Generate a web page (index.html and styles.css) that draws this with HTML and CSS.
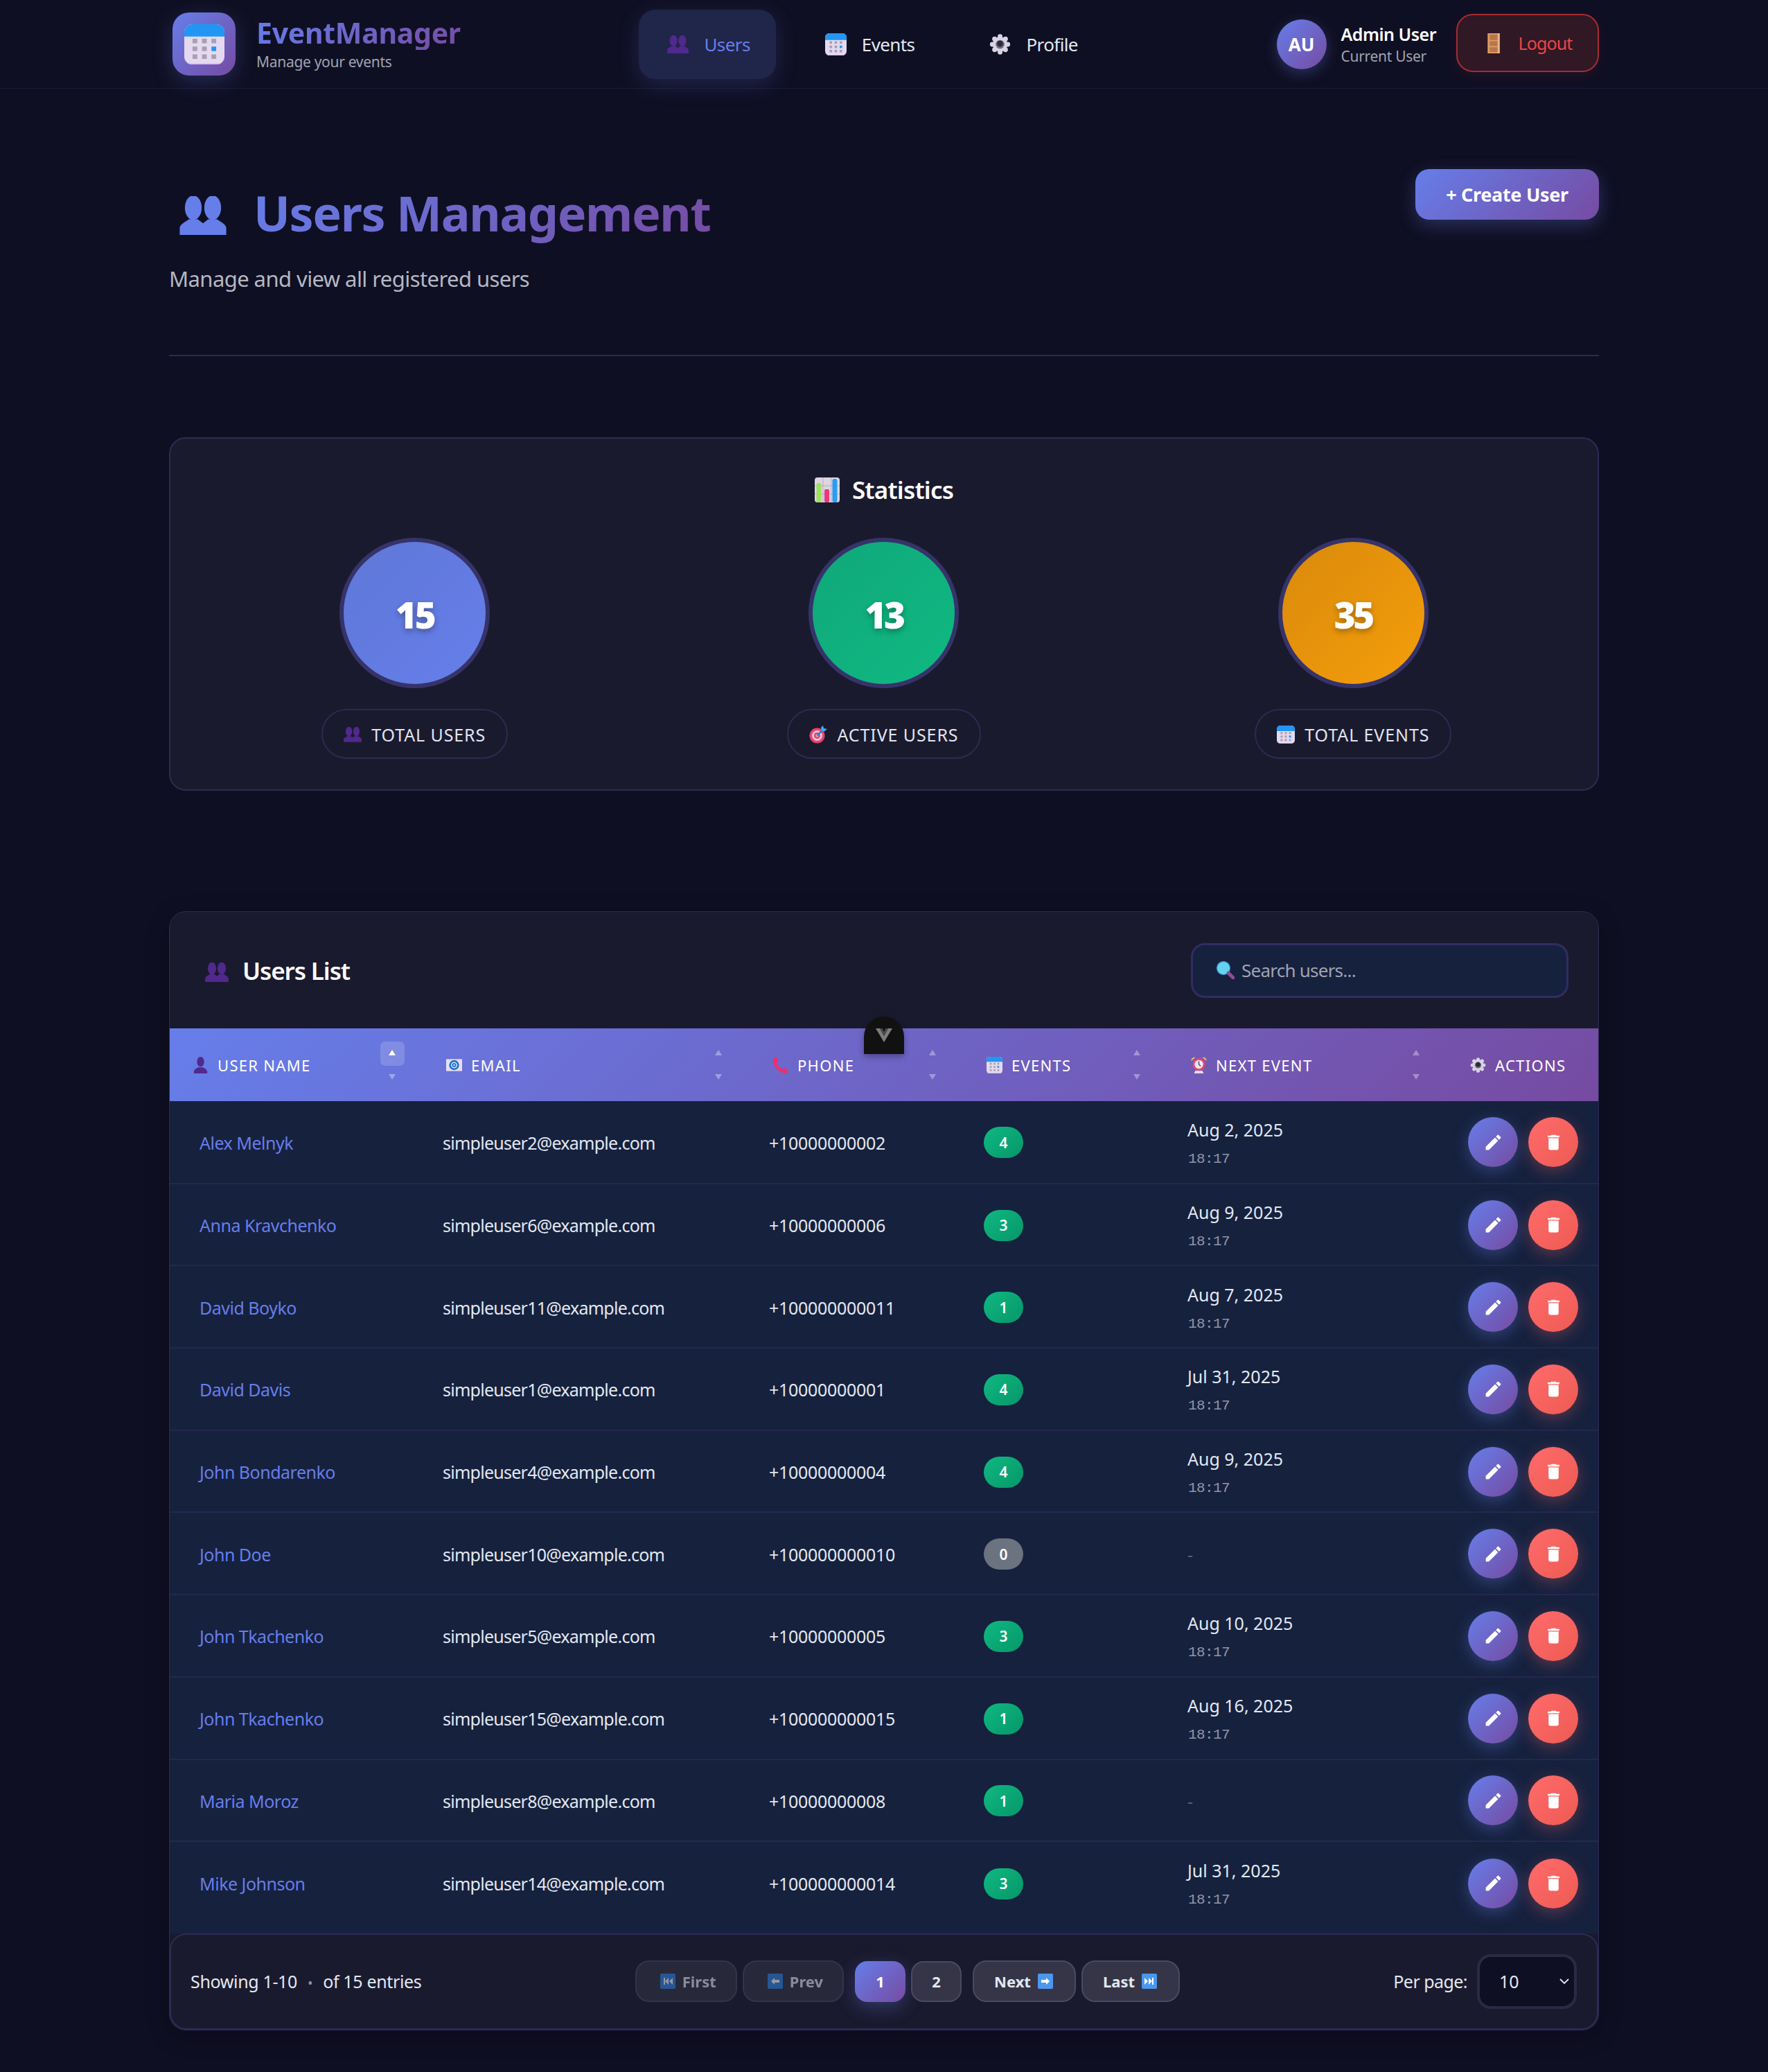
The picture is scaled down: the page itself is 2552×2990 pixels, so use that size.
FILE: index.html
```html
<!DOCTYPE html>
<html lang="en">
<head>
<meta charset="utf-8">
<title>EventManager - Users</title>
<link rel="stylesheet" href="styles.css">
</head>
<body>
<svg class="sprite" aria-hidden="true">
  <symbol id="i-users" viewBox="0 0 36 30">
    <ellipse cx="10.500" cy="9" rx="6.500" ry="9.500" fill="currentColor"/>
    <ellipse cx="25.500" cy="9" rx="6.500" ry="9.500" fill="currentColor"/>
    <path d="M0 30v-5c0-3 3-4 7-7h7l4 3 4-3h7c4 3 7 4 7 7v5z" fill="currentColor"/>
  </symbol>
  <symbol id="i-user" viewBox="0 0 24 30">
    <ellipse cx="12" cy="9" rx="6.500" ry="9" fill="currentColor"/>
    <path d="M0 30v-3c0-4 4-6 8-8h8c4 2 8 4 8 8v3z" fill="currentColor"/>
  </symbol>
  <symbol id="i-cal" viewBox="0 0 34 36" preserveAspectRatio="none">
    <rect x="0" y="0" width="34" height="36" rx="7" fill="#e4d9ef"/>
    <path d="M0 11V7a7 7 0 0 1 7-7h20a7 7 0 0 1 7 7v4z" fill="#2196f3"/>
    <path d="M0 31a7 5 0 0 0 7 5h20a7 5 0 0 0 7-5v1a5 4 0 0 1-5 3H5a5 4 0 0 1-5-3z" fill="#d8b4f0"/>
    <g fill="#a79fb2">
      <rect x="7" y="13" width="4" height="4"/><rect x="15" y="13" width="4" height="4"/><rect x="23" y="13" width="4" height="4"/>
      <rect x="7" y="20" width="4" height="4"/><rect x="15" y="20" width="4" height="4"/>
      <rect x="7" y="27" width="4" height="4"/><rect x="15" y="27" width="4" height="4"/><rect x="23" y="27" width="4" height="4"/>
    </g>
    <rect x="23" y="20" width="4" height="4" fill="#2196f3"/>
  </symbol>
  <symbol id="i-gear" viewBox="0 0 32 32">
    <g fill="#d9d3e3">
      <circle cx="16" cy="4.500" r="3.600"/><circle cx="16" cy="27.500" r="3.600"/><circle cx="4.500" cy="16" r="3.600"/><circle cx="27.500" cy="16" r="3.600"/>
      <circle cx="7.900" cy="7.900" r="3.600"/><circle cx="24.100" cy="7.900" r="3.600"/><circle cx="7.900" cy="24.100" r="3.600"/><circle cx="24.100" cy="24.100" r="3.600"/>
      <circle cx="16" cy="16" r="11"/>
    </g>
    <circle cx="16" cy="16" r="6.500" fill="#6f6a7c"/>
    <circle cx="16" cy="15" r="4.500" fill="#2c2a3e"/>
  </symbol>
  <symbol id="i-door" viewBox="0 0 18 30">
    <rect width="18" height="30" fill="#dd9a63"/>
    <path d="M3 2h12v8H3zM3 12h12v7H3zM3 21h12v7H3z" fill="#b8764a"/>
    <rect x="15" y="0" width="3" height="30" fill="#e9b488"/>
  </symbol>
  <symbol id="i-chart" viewBox="0 0 36 36">
    <rect width="36" height="36" rx="4" fill="#dcd6e3"/>
    <path d="M0 12h36M0 24h36M12 0v36M24 0v36" stroke="#aaa4b3" stroke-width=".8"/>
    <rect x="2.500" y="8" width="7" height="28" rx="2.500" fill="#9ee05a"/>
    <rect x="14" y="17" width="7" height="19" rx="2" fill="#ea3a7e"/>
    <rect x="25.500" y="2" width="7" height="34" rx="2.500" fill="#2b9cf0"/>
  </symbol>
  <symbol id="i-target" viewBox="0 0 26 26">
    <circle cx="11.500" cy="14.500" r="11" fill="#e8436f"/>
    <circle cx="11.500" cy="14.500" r="7.500" fill="#efc3d8"/>
    <circle cx="11.500" cy="14.500" r="4.500" fill="#e8436f"/>
    <circle cx="11.500" cy="14.500" r="2" fill="#c8c4ce"/>
    <path d="M11.500 14.500 21 5" stroke="#1f7fd6" stroke-width="2.400"/>
    <path d="M17 3 20 0l1 4 5 1-4 3.500-4-.5z" fill="#46a9f5"/>
  </symbol>
  <symbol id="i-mail" viewBox="0 0 24 18">
    <rect width="24" height="18" fill="#e8def2"/>
    <circle cx="12" cy="9" r="7.500" fill="#1e73cf"/>
    <circle cx="12" cy="9" r="4" fill="none" stroke="#cfe4fa" stroke-width="1.600"/>
    <circle cx="12" cy="9" r="1.300" fill="#cfe4fa"/>
  </symbol>
  <symbol id="i-phone" viewBox="0 0 24 26">
    <path d="M4 2C1 8 6 20 20 24" fill="none" stroke="#e8326f" stroke-width="5"/>
    <path d="M2 1l5 0 2 6-4 2zM14 20l4-3 6 5-3 4z" fill="#e8326f"/>
  </symbol>
  <symbol id="i-alarm" viewBox="0 0 22 24">
    <path d="M0 6a4.500 4.500 0 0 1 6-5zM22 6a4.500 4.500 0 0 0-6-5z" fill="#f2c13d"/>
    <circle cx="11" cy="11" r="9" fill="#e8436f"/>
    <circle cx="11" cy="11" r="6.200" fill="#f0e8f3"/>
    <path d="M11 6.500V11l2.500 2.500" stroke="#4b4660" stroke-width="1.500" fill="none"/>
    <path d="M4 24l2-4h10l2 4z" fill="#e4d9ef"/>
  </symbol>
  <symbol id="i-search" viewBox="0 0 26 26">
    <circle cx="10" cy="10" r="9.500" fill="#62d4ee"/>
    <circle cx="10" cy="10" r="9.500" fill="none" stroke="#3b8fc9" stroke-width="1.200"/>
    <path d="M17 17l7 7" stroke="#8e4d93" stroke-width="5" stroke-linecap="round"/>
  </symbol>
  <symbol id="i-first" viewBox="0 0 22 22">
    <rect width="22" height="22" rx="2" fill="#2f89ea"/>
    <path d="M5 6h2v10H5zM12 6v10L7 11zM18 6v10l-5-5z" fill="#fff"/>
  </symbol>
  <symbol id="i-prev" viewBox="0 0 22 22">
    <rect width="22" height="22" rx="2" fill="#2f89ea"/>
    <path d="M5 11l5-5v3h7v4h-7v3z" fill="#fff"/>
  </symbol>
  <symbol id="i-next" viewBox="0 0 22 22">
    <rect width="22" height="22" rx="2" fill="#4a97f0"/>
    <path d="M17 11l-5-5v3H5v4h7v3z" fill="#fff"/>
  </symbol>
  <symbol id="i-last" viewBox="0 0 22 22">
    <rect width="22" height="22" rx="2" fill="#4a97f0"/>
    <path d="M17 6h-2v10h2zM10 6v10l5-5zM4 6v10l5-5z" fill="#fff"/>
  </symbol>
  <symbol id="i-edit" viewBox="0 0 24 24">
    <path d="M3 17.250V21h3.750L17.810 9.940l-3.750-3.750L3 17.250zM20.710 7.040a1 1 0 0 0 0-1.410l-2.340-2.340a1 1 0 0 0-1.410 0l-1.830 1.830 3.750 3.750 1.830-1.830z" fill="#fff"/>
  </symbol>
  <symbol id="i-trash" viewBox="0 0 24 24">
    <path d="M6 19c0 1.100.9 2 2 2h8c1.100 0 2-.9 2-2V7H6v12zM19 4h-3.500l-1-1h-5l-1 1H5v2h14V4z" fill="#fff"/>
  </symbol>
</svg>

<header class="topbar">
  <div class="topbar-inner">
    <a class="brand">
      <span class="brand-logo"><svg class="logo-cal"><use href="#i-cal"/></svg></span>
      <span class="brand-text">
        <span class="brand-name">EventManager</span>
        <span class="brand-sub">Manage your events</span>
      </span>
    </a>
    <nav class="nav">
      <a class="nav-item active"><svg class="ic-nav ic-purple"><use href="#i-users"/></svg>Users</a>
      <a class="nav-item"><svg class="ic-nav"><use href="#i-cal"/></svg>Events</a>
      <a class="nav-item"><svg class="ic-nav"><use href="#i-gear"/></svg>Profile</a>
    </nav>
    <div class="user-box">
      <span class="avatar">AU</span>
      <span class="user-meta">
        <span class="user-name">Admin User</span>
        <span class="user-role">Current User</span>
      </span>
      <button class="logout"><svg class="ic-door"><use href="#i-door"/></svg>Logout</button>
    </div>
  </div>
</header>

<main class="page">
  <section class="page-head">
    <div>
      <h1 class="page-title"><svg class="ic-title"><use href="#i-users"/></svg><span class="grad-text">Users Management</span></h1>
      <p class="page-sub">Manage and view all registered users</p>
    </div>
    <button class="create-btn">+ Create User</button>
  </section>

  <section class="stats">
    <h2 class="stats-title"><svg class="ic-chart"><use href="#i-chart"/></svg>Statistics</h2>
    <div class="stats-grid">
      <div class="stat">
        <div class="stat-circle c-blue">15</div>
        <div class="stat-label"><svg class="ic-label ic-purple"><use href="#i-users"/></svg>TOTAL USERS</div>
      </div>
      <div class="stat">
        <div class="stat-circle c-green">13</div>
        <div class="stat-label"><svg class="ic-label"><use href="#i-target"/></svg>ACTIVE USERS</div>
      </div>
      <div class="stat">
        <div class="stat-circle c-orange">35</div>
        <div class="stat-label"><svg class="ic-label"><use href="#i-cal"/></svg>TOTAL EVENTS</div>
      </div>
    </div>
  </section>

  <section class="list">
    <div class="list-head">
      <h2 class="list-title"><svg class="ic-list ic-purple"><use href="#i-users"/></svg>Users List</h2>
      <label class="search"><svg class="ic-search"><use href="#i-search"/></svg><input class="search-input" placeholder="Search users..."></label>
    </div>
    <div class="table-wrap">
      <span class="devtools"><svg class="devtools-v" viewBox="0 0 24 20"><path d="M0 0h6l6 11L18 0h6L12 20z" fill="#7d7d7d"/><path d="M6 0h3.500L12 5l2.500-5H18l-6 11z" fill="#4a4a4a"/></svg></span>
      <table class="table">
        <colgroup><col class="w1"><col class="w2"><col class="w3"><col class="w4"><col class="w5"><col class="w6"></colgroup>
        <thead>
          <tr>
            <th class="th-first"><span class="th-in"><svg class="ic-th ic-purple"><use href="#i-user"/></svg>USER NAME</span><span class="sort sorted"><i class="up"></i><i class="down"></i></span></th>
            <th><span class="th-in"><svg class="ic-th"><use href="#i-mail"/></svg>EMAIL</span><span class="sort"><i class="up"></i><i class="down"></i></span></th>
            <th><span class="th-in"><svg class="ic-th"><use href="#i-phone"/></svg>PHONE</span><span class="sort"><i class="up"></i><i class="down"></i></span></th>
            <th><span class="th-in"><svg class="ic-th"><use href="#i-cal"/></svg>EVENTS</span><span class="sort"><i class="up"></i><i class="down"></i></span></th>
            <th><span class="th-in"><svg class="ic-th"><use href="#i-alarm"/></svg>NEXT EVENT</span><span class="sort"><i class="up"></i><i class="down"></i></span></th>
            <th><span class="th-in"><svg class="ic-th"><use href="#i-gear"/></svg>ACTIONS</span></th>
          </tr>
        </thead>
        <tbody>
          <tr><td><a class="name">Alex Melnyk</a></td><td>simpleuser2@example.com</td><td>+10000000002</td><td><span class="badge">4</span></td><td><div class="date">Aug 2, 2025</div><div class="time">18:17</div></td><td><div class="acts"><button class="act act-edit"><svg class="ic-act"><use href="#i-edit"/></svg></button><button class="act act-del"><svg class="ic-act"><use href="#i-trash"/></svg></button></div></td></tr>
          <tr><td><a class="name">Anna Kravchenko</a></td><td>simpleuser6@example.com</td><td>+10000000006</td><td><span class="badge">3</span></td><td><div class="date">Aug 9, 2025</div><div class="time">18:17</div></td><td><div class="acts"><button class="act act-edit"><svg class="ic-act"><use href="#i-edit"/></svg></button><button class="act act-del"><svg class="ic-act"><use href="#i-trash"/></svg></button></div></td></tr>
          <tr><td><a class="name">David Boyko</a></td><td>simpleuser11@example.com</td><td>+100000000011</td><td><span class="badge">1</span></td><td><div class="date">Aug 7, 2025</div><div class="time">18:17</div></td><td><div class="acts"><button class="act act-edit"><svg class="ic-act"><use href="#i-edit"/></svg></button><button class="act act-del"><svg class="ic-act"><use href="#i-trash"/></svg></button></div></td></tr>
          <tr><td><a class="name">David Davis</a></td><td>simpleuser1@example.com</td><td>+10000000001</td><td><span class="badge">4</span></td><td><div class="date">Jul 31, 2025</div><div class="time">18:17</div></td><td><div class="acts"><button class="act act-edit"><svg class="ic-act"><use href="#i-edit"/></svg></button><button class="act act-del"><svg class="ic-act"><use href="#i-trash"/></svg></button></div></td></tr>
          <tr><td><a class="name">John Bondarenko</a></td><td>simpleuser4@example.com</td><td>+10000000004</td><td><span class="badge">4</span></td><td><div class="date">Aug 9, 2025</div><div class="time">18:17</div></td><td><div class="acts"><button class="act act-edit"><svg class="ic-act"><use href="#i-edit"/></svg></button><button class="act act-del"><svg class="ic-act"><use href="#i-trash"/></svg></button></div></td></tr>
          <tr><td><a class="name">John Doe</a></td><td>simpleuser10@example.com</td><td>+100000000010</td><td><span class="badge badge-zero">0</span></td><td><div class="nodate">-</div></td><td><div class="acts"><button class="act act-edit"><svg class="ic-act"><use href="#i-edit"/></svg></button><button class="act act-del"><svg class="ic-act"><use href="#i-trash"/></svg></button></div></td></tr>
          <tr><td><a class="name">John Tkachenko</a></td><td>simpleuser5@example.com</td><td>+10000000005</td><td><span class="badge">3</span></td><td><div class="date">Aug 10, 2025</div><div class="time">18:17</div></td><td><div class="acts"><button class="act act-edit"><svg class="ic-act"><use href="#i-edit"/></svg></button><button class="act act-del"><svg class="ic-act"><use href="#i-trash"/></svg></button></div></td></tr>
          <tr><td><a class="name">John Tkachenko</a></td><td>simpleuser15@example.com</td><td>+100000000015</td><td><span class="badge">1</span></td><td><div class="date">Aug 16, 2025</div><div class="time">18:17</div></td><td><div class="acts"><button class="act act-edit"><svg class="ic-act"><use href="#i-edit"/></svg></button><button class="act act-del"><svg class="ic-act"><use href="#i-trash"/></svg></button></div></td></tr>
          <tr><td><a class="name">Maria Moroz</a></td><td>simpleuser8@example.com</td><td>+10000000008</td><td><span class="badge">1</span></td><td><div class="nodate">-</div></td><td><div class="acts"><button class="act act-edit"><svg class="ic-act"><use href="#i-edit"/></svg></button><button class="act act-del"><svg class="ic-act"><use href="#i-trash"/></svg></button></div></td></tr>
          <tr class="last"><td><a class="name">Mike Johnson</a></td><td>simpleuser14@example.com</td><td>+100000000014</td><td><span class="badge">3</span></td><td><div class="date">Jul 31, 2025</div><div class="time">18:17</div></td><td><div class="acts"><button class="act act-edit"><svg class="ic-act"><use href="#i-edit"/></svg></button><button class="act act-del"><svg class="ic-act"><use href="#i-trash"/></svg></button></div></td></tr>
        </tbody>
      </table>
    </div>
    <div class="foot">
      <div class="foot-info">Showing 1-10<span class="dot">•</span>of 15 entries</div>
      <div class="pager">
        <button class="pg pg-off"><svg class="ic-pg"><use href="#i-first"/></svg>First</button>
        <button class="pg pg-off"><svg class="ic-pg"><use href="#i-prev"/></svg>Prev</button>
        <div class="pages">
          <button class="pg-num pg-active">1</button>
          <button class="pg-num">2</button>
        </div>
        <button class="pg pg-on">Next<svg class="ic-pg"><use href="#i-next"/></svg></button>
        <button class="pg pg-on">Last<svg class="ic-pg"><use href="#i-last"/></svg></button>
      </div>
      <div class="per">
        <span class="per-label">Per page:</span>
        <span class="select-wrap">
          <select class="per-select"><option>10</option><option>25</option><option>50</option></select>
          <svg class="select-chev" viewBox="0 0 14 9"><path d="M1 1l6 6 6-6" fill="none" stroke="#e2e8f0" stroke-width="1.800"/></svg>
        </span>
      </div>
    </div>
  </section>
</main>
</body>
</html>
```

FILE: styles.css
```css
* { box-sizing: border-box; }
html, body { margin: 0; padding: 0; }
body {
  background: #0f0f23;
  color: #e2e8f0;
  font-family: "Noto Sans", "Open Sans", sans-serif;
  height: 2990px;
  overflow: hidden;
}
.sprite { position: absolute; width: 0; height: 0; }
.ic-purple { color: #50298c; }
button { font-family: inherit; cursor: pointer; }

/* top bar */
.topbar { height: 128px; border-bottom: 1px solid #1a1a38; }
.topbar-inner {
  width: 2064px; margin: 0 auto; height: 127px;
  display: flex; align-items: center; justify-content: space-between;
}
.brand { display: flex; align-items: center; gap: 30px; padding-left: 5px; }
.brand-logo {
  width: 91px; height: 91px; border-radius: 24px;
  background: linear-gradient(135deg, #667eea, #764ba2);
  box-shadow: 0 8px 30px rgba(102,126,234,.25);
  display: flex; align-items: center; justify-content: center;
}
.logo-cal { width: 58px; height: 58px; }
.brand-text { display: flex; flex-direction: column; }
.brand-name {
  font-size: 41px; line-height: 50px; font-weight: 700; letter-spacing: -.3px;
  background: linear-gradient(135deg, #667eea, #764ba2);
  -webkit-background-clip: text; background-clip: text; color: transparent;
}
.brand-sub { font-size: 21px; line-height: 34px; letter-spacing: -.3px; color: #a0a3b1; }
.nav { display: flex; gap: 30px; margin-left: 8px; }
.nav-item {
  display: flex; align-items: center; gap: 22px;
  height: 100px; padding: 0 37px 0 41px;
  font-size: 26px; letter-spacing: -.6px; color: #e2e8f0; border-radius: 24px;
}
.nav-item.active {
  color: #667eea; background: #20254a;
  box-shadow: 0 8px 32px rgba(102,126,234,.2);
}
.ic-nav { width: 31px; height: 32px; }
.user-box { display: flex; align-items: center; }
.avatar {
  width: 72px; height: 72px; border-radius: 50%;
  background: linear-gradient(135deg, #667eea, #764ba2);
  box-shadow: 0 6px 20px rgba(102,126,234,.3);
  display: flex; align-items: center; justify-content: center;
  font-weight: 700; font-size: 26px; color: #fff;
}
.user-meta { display: flex; flex-direction: column; margin: 0 29px 0 21px; }
.user-name { font-size: 25px; line-height: 34px; font-weight: 600; letter-spacing: -.5px; color: #fff; }
.user-role { font-size: 21px; line-height: 30px; letter-spacing: -.3px; color: #a0a3b1; }
.logout {
  width: 206px; height: 84px; border-radius: 24px;
  border: 2px solid #a52c33; background: #301825;
  color: #ef4444; font-size: 25px; letter-spacing: -.9px;
  display: flex; align-items: center; justify-content: center; gap: 27px;
  padding-left: 12px;
  box-shadow: 0 6px 20px rgba(239,68,68,.08);
  margin-top: -3px;
}
.ic-door { width: 18px; height: 29px; }

/* page heading */
.page { width: 2064px; margin: 0 auto; }
.page-head {
  display: flex; justify-content: space-between; align-items: flex-start;
  padding-top: 116px; height: 386px;
  border-bottom: 2px solid #2b2a52;
  margin-bottom: 117px;
}
.page-title {
  margin: 17px 0 0; display: flex; align-items: center; gap: 36px;
  padding-left: 12px;
  font-size: 70px; line-height: 92px; font-weight: 700; letter-spacing: -1.4px;
}
.ic-title { width: 74px; height: 56px; color: #667eea; margin-top: 8px; }
.grad-text {
  background: linear-gradient(135deg, #667eea, #764ba2);
  -webkit-background-clip: text; background-clip: text; color: transparent;
}
.page-sub { margin: 27px 0 0; font-size: 31px; line-height: 44px; letter-spacing: -.58px; color: #b4b7c4; }
.create-btn {
  width: 265px; height: 73px; border: 0; border-radius: 20px;
  background: linear-gradient(135deg, #667eea, #764ba2);
  color: #fff; font-size: 27px; font-weight: 700; letter-spacing: -.3px;
  box-shadow: 0 8px 26px rgba(102,126,234,.3);
}

/* stats */
.stats {
  height: 510px; background: #1a1a2e;
  border: 2px solid #2d2b55; border-radius: 24px;
  padding: 50px 30px 0;
  margin-bottom: 174px;
}
.stats-title {
  margin: 0; display: flex; align-items: center; justify-content: center; gap: 18px;
  font-size: 35px; line-height: 48px; font-weight: 600; letter-spacing: -.8px; color: #fff;
}
.ic-chart { width: 36px; height: 36px; }
.stats-grid { display: grid; grid-template-columns: repeat(3, 1fr); gap: 32px; margin-top: 45px; }
.stat { display: flex; flex-direction: column; align-items: center; }
.stat-circle {
  width: 217px; height: 217px; border-radius: 50%;
  border: 6px solid #36336a;
  display: flex; align-items: center; justify-content: center;
  font-size: 53px; font-weight: 900; letter-spacing: -3.5px; color: #fff; padding-top: 4px;
  text-shadow: 0 4px 8px rgba(0,0,0,.3);
}
.c-blue { background: linear-gradient(135deg, #5f78d8, #667eea); }
.c-green { background: linear-gradient(135deg, #10a87a, #10b981); }
.c-orange { background: linear-gradient(135deg, #d98a0c, #f59e0b); }
.stat-label {
  margin-top: 30px; height: 72px; border-radius: 36px;
  border: 2px solid #2b2a52; padding: 1px 30px 0;
  display: flex; align-items: center; gap: 14px;
  font-size: 25px; letter-spacing: .9px; color: #e0e4f0;
}
.ic-label { width: 26px; height: 26px; }

/* list */
.list {
  background: #1a1a2e; border: 1px solid #2d2b55; border-radius: 24px;
  box-shadow: 0 8px 32px rgba(0,0,0,.3);
}
.list-head {
  height: 168px; display: flex; align-items: center; justify-content: space-between;
  padding: 0 43px 0 50px;
}
.list-title {
  margin: 0; display: flex; align-items: center; gap: 19px;
  font-size: 35px; font-weight: 600; letter-spacing: -1.1px; color: #fff;
}
.ic-list { width: 36px; height: 28px; margin-top: 6px; }
.search {
  width: 545px; height: 79px; border: 3px solid #2f2d63; border-radius: 20px;
  background: #16213e; display: flex; align-items: center; padding-left: 34px; gap: 8px;
}
.ic-search { width: 26px; height: 26px; }
.search-input {
  flex: 1; background: transparent; border: 0; outline: 0;
  font: 26px "Noto Sans", sans-serif; letter-spacing: -.76px; color: #e2e8f0;
}
.search-input::placeholder { color: #a0a3b1; opacity: 1; }

.table-wrap { position: relative; background: #16213e; padding-bottom: 14px; }
.devtools {
  position: absolute; left: 1002px; top: -17px; width: 58px; height: 54px;
  background: #111; border-radius: 29px 29px 0 0;
  box-shadow: 0 4px 10px rgba(0,0,0,.3);
  display: flex; justify-content: center; padding-top: 17px; z-index: 2;
}
.devtools-v { width: 24px; height: 20px; }
.table { width: 100%; border-collapse: collapse; table-layout: fixed; }
.w1 { width: 351px; } .w2 { width: 471px; } .w3 { width: 309px; }
.w4 { width: 295px; } .w5 { width: 403px; } .w6 { width: 233px; }
thead tr {
  height: 105px;
  background: linear-gradient(135deg, #667eea, #764ba2);
}
th {
  position: relative; padding: 0 0 0 48px; text-align: left;
  font-size: 22px; font-weight: 400; color: #fff; letter-spacing: 1.3px;
}
.th-first { padding-left: 33px; }
.th-in { display: flex; align-items: center; gap: 13px; }
.ic-th { width: 23px; height: 24px; flex: none; }
.sort { position: absolute; right: 12px; top: 19px; width: 35px; height: 70px; }
.sort i { position: absolute; left: 12px; width: 0; height: 0; border-left: 5px solid transparent; border-right: 5px solid transparent; }
.sort .up { top: 12px; border-bottom: 8px solid rgba(255,255,255,.35); }
.sort .down { top: 47px; border-top: 8px solid rgba(255,255,255,.35); }
.sorted::before { content: ""; position: absolute; left: 0; top: 0; width: 35px; height: 35px; border-radius: 7px; background: rgba(255,255,255,.16); }
.sorted .up { border-bottom-color: #fff; }
tbody tr { height: 118.7px; }
tbody tr td { border-bottom: 2px solid #25274f; }
tbody tr.last td { border-bottom: 0; }
td { padding: 2px 0 0 43px; font-size: 25px; letter-spacing: -.74px; color: #e2e8f0; }
td:nth-child(3) { letter-spacing: -.3px; }
.name { color: #667eea; letter-spacing: -.5px; }
.badge {
  display: inline-flex; align-items: center; justify-content: center;
  min-width: 57px; height: 45px; border-radius: 23px;
  background: linear-gradient(135deg, #10b981, #059669);
  color: #fff; font-size: 21px; font-weight: 600; letter-spacing: 0;
  margin-left: 1px;
}
.badge-zero { background: #6b7280; }
.date { font-size: 25px; line-height: 34px; letter-spacing: 0; }
.time { font: 21px/24px "Liberation Mono", monospace; letter-spacing: -.6px; color: #9295a8; margin-top: 14px; margin-left: 1px; }
.nodate { color: #5a5e78; font-size: 25px; }
.acts { display: flex; gap: 15px; margin: -1px 0 0 2px; }
.act {
  width: 72px; height: 72px; border-radius: 50%; border: 0; padding: 0;
  display: flex; align-items: center; justify-content: center;
}
.act-edit { background: linear-gradient(135deg, #667eea, #764ba2); box-shadow: 0 6px 22px rgba(102,126,234,.35); }
.act-del { background: linear-gradient(135deg, #ff6b6b, #ee5a52); box-shadow: 0 6px 22px rgba(255,107,107,.3); }
.ic-act { width: 29px; height: 29px; }

/* footer */
.foot {
  height: 139px; background: #1a1a2e;
  border: 2px solid #2d2b55; border-radius: 24px; margin-top: 0;
  display: flex; align-items: center; justify-content: space-between;
  padding: 0 29px 0 28px;
}
.foot-info { font-size: 25px; letter-spacing: -.35px; color: #e2e8f0; }
.dot { color: #8d90a5; margin: 0 15px; font-size: 20px; }
.pager { display: flex; align-items: center; gap: 8px; }
.pages { display: flex; gap: 8px; margin: 0 8px; }
.pg {
  height: 60px; padding: 0 28px 0 34px; border-radius: 20px;
  border: 2px solid #4a4a5e; background: #353547;
  color: #e2e8f0; font-size: 22px; font-weight: 700;
  display: flex; align-items: center; gap: 10px;
}
.pg-on { padding: 0 31px 0 29px; }
.pg-off { opacity: .55; }
.pg-num {
  width: 73px; height: 59px; border-radius: 18px;
  border: 2px solid #4a4a5e; background: #353547;
  color: #e2e8f0; font-size: 22px; font-weight: 700;
}
.pg-active {
  border: 0; color: #fff;
  background: linear-gradient(135deg, #667eea, #764ba2);
  box-shadow: 0 8px 26px rgba(102,126,234,.3);
}
.ic-pg { width: 22px; height: 22px; }
.per { display: flex; align-items: center; gap: 14px; font-size: 25px; color: #e2e8f0; }
.per-label { letter-spacing: -.55px; }
.select-wrap { position: relative; display: block; }
.per-select {
  display: block; appearance: none;
  width: 144px; height: 79px; border-radius: 20px;
  border: 4px solid #2a2a45; background: #0f0f23; color: #e2e8f0;
  font: 25px "Noto Sans", sans-serif; padding-left: 28px;
}
.select-chev { position: absolute; right: 11px; top: 35px; width: 14px; height: 9px; pointer-events: none; }
```
